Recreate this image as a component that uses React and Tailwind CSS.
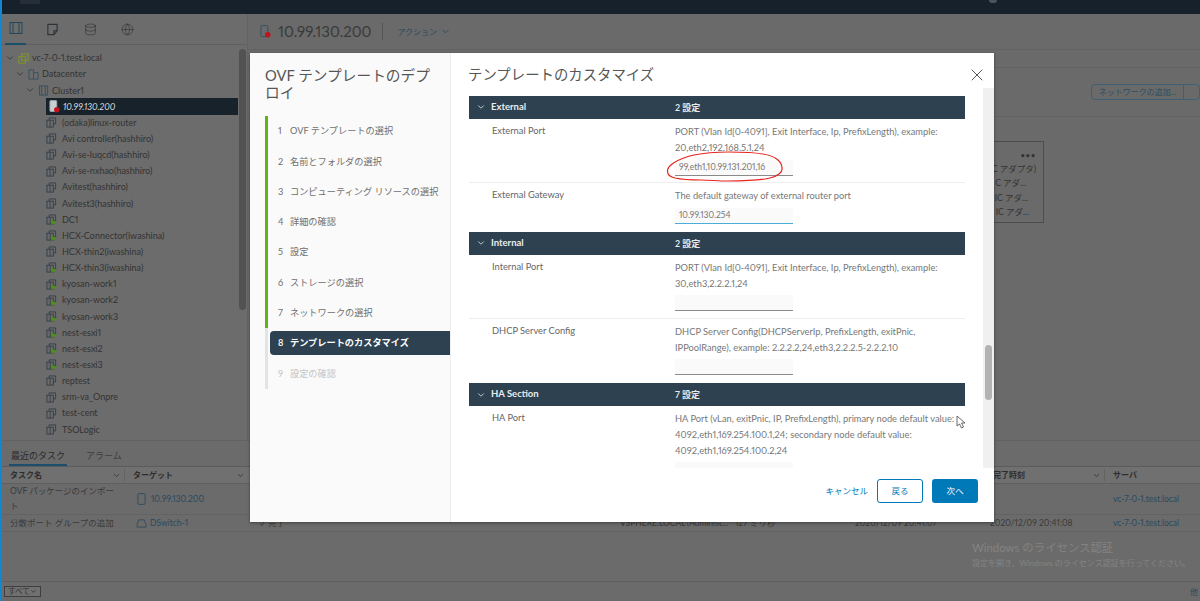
import React from 'react';
import { ChevronDown, Database, Globe, X } from 'lucide-react';

const treeItems = [
  { name: '(odaka)linux-router' },
  { name: 'Avi controller(hashhiro)' },
  { name: 'Avi-se-luqcd(hashhiro)' },
  { name: 'Avi-se-nxhao(hashhiro)' },
  { name: 'Avitest(hashhiro)' },
  { name: 'Avitest3(hashhiro)' },
  { name: 'DC1', on: true },
  { name: 'HCX-Connector(iwashina)', on: true },
  { name: 'HCX-thin2(iwashina)' },
  { name: 'HCX-thin3(iwashina)', on: true },
  { name: 'kyosan-work1', on: true },
  { name: 'kyosan-work2', on: true },
  { name: 'kyosan-work3', on: true },
  { name: 'nest-esxi1', on: true },
  { name: 'nest-esxi2', on: true },
  { name: 'nest-esxi3', on: true },
  { name: 'reptest' },
  { name: 'srm-va_Onpre' },
  { name: 'test-cent' },
  { name: 'TSOLogic' },
];

const steps = [
  'OVF テンプレートの選択',
  '名前とフォルダの選択',
  'コンピューティング リソースの選択',
  '詳細の確認',
  '設定',
  'ストレージの選択',
  'ネットワークの選択',
  'テンプレートのカスタマイズ',
  '設定の確認',
];

const VmIcon = ({ on }) => (
  <svg viewBox="0 0 12 12" className="h-[11px] w-[11px] shrink-0" fill="none" stroke="#333f48" strokeWidth="1">
    <path d="M3.5 3.5V1h7v6.5H8" />
    <rect x="1" y="3.5" width="7" height="7.5" />
    <path d="M4.5 3.5V11" />
    {on && <path d="M6 6l6 3-6 3z" fill="#4f8f1c" stroke="none" />}
  </svg>
);

const HostIcon = ({ dark }) => (
  <svg viewBox="0 0 12 14" className="h-[13px] w-[11px] shrink-0">
    <rect x="1" y="0.5" width="7.5" height="12" rx="1" fill={dark ? '#c9ced1' : 'none'} stroke={dark ? '#9aa4aa' : '#35505f'} />
    <circle cx="8.5" cy="10.5" r="3" fill="#c1131f" />
  </svg>
);

const TreeBranch = ({ indent, icon, children }) => (
  <div className={`flex h-[16.15px] items-center gap-[3px] ${indent}`}>
    <ChevronDown size={10} strokeWidth={2} className="shrink-0 text-[#333]" />
    {icon}
    <span className="whitespace-nowrap">{children}</span>
  </div>
);

const SectionHead = ({ name, count }) => (
  <div className="flex h-[23.5px] items-center bg-[#2d4150] text-[9.5px] font-bold text-[#e8ecee]">
    <ChevronDown size={10} className="ml-[7px] mr-[5px] shrink-0 text-[#dfe5e8]" />
    <span className="w-[184px]">{name}</span>
    <span className="text-[9px] font-semibold">{count}</span>
  </div>
);

const Param = ({ label, lines, value, active, divider, h }) => (
  <div className={`flex items-start pl-[23px] text-[9.3px] text-[#777] ${h} ${divider ? 'border-b border-[#eeeeee]' : ''}`}>
    <span className="w-[183px] shrink-0 pt-[5px] text-[#666]">{label}</span>
    <div className="flex flex-col">
      <div className="pt-[5px] leading-[15.7px]">
        {lines.map((l) => <div key={l} className="whitespace-nowrap">{l}</div>)}
      </div>
      <div className={`mt-[4px] h-[16px] w-[118px] border-b bg-[#fafafa] pl-[4px] text-[8.5px] leading-[15px] text-[#777] ${active ? 'border-[#49afd9]' : 'border-[#8a8a8a]'}`}>
        {value}
      </div>
    </div>
  </div>
);

const App = () => {
  return (
    <div className="relative flex h-[601px] w-[1200px] flex-col overflow-hidden border-l-2 border-[#1187d0] bg-[#6a6a6a] text-[10px] text-[#333] proportional-nums [font-family:Lato,'Noto_Sans_CJK_JP',sans-serif]">
      {/* top bar, dimmed */}
      <div className="flex h-[14px] shrink-0 items-start justify-between bg-[#17212b] pl-[18px] pr-[203px]">
        <div className="h-[4px] w-[20px] bg-[#262f39]" />
        <div className="h-[3px] w-[8px] rounded-b-full bg-[#4c5359]" />
      </div>

      <div className="flex h-[426px] shrink-0">
        {/* inventory */}
        <div className="flex w-[246px] shrink-0 flex-col overflow-hidden border-r border-[#636363] bg-[#6c6c6c]">
          <div className="flex h-[31px] shrink-0 items-center border-b border-[#5f5f5f] pl-[3px]">
            <div className="flex h-[31px] w-[21px] items-center justify-center border-b-2 border-[#1d4f6d]">
              <svg viewBox="0 0 14 14" className="h-[14px] w-[14px]" fill="none" stroke="#25465a" strokeWidth="1">
                <rect x="1" y="1.5" width="12" height="11" />
                <path d="M4 1.5v11M10 1.5v11" />
              </svg>
            </div>
            <svg viewBox="0 0 14 14" className="ml-[20px] h-[13px] w-[13px]" fill="none" stroke="#2d3338" strokeWidth="1.2">
              <path d="M2 1.5h10v7l-3.5 4H2z" />
              <path d="M12 8.5H8.5v4" />
            </svg>
            <Database size={13} strokeWidth={1.2} className="ml-[25px] text-[#333]" />
            <Globe size={13} strokeWidth={1.2} className="ml-[24px] text-[#333]" />
          </div>
          <div className="flex min-h-0 flex-1">
            <div className="min-w-0 flex-1 pl-[3px] pt-[5px] text-[9px] text-[#333]">
              <TreeBranch indent="" icon={
                <svg viewBox="0 0 12 12" className="h-[11px] w-[11px] shrink-0" fill="none" stroke="#7d9426" strokeWidth="1.2">
                  <rect x="1" y="4" width="7" height="7" />
                  <rect x="4" y="1" width="7" height="7" />
                </svg>
              }>vc-7-0-1.test.local</TreeBranch>
              <TreeBranch indent="pl-[10px]" icon={
                <svg viewBox="0 0 12 12" className="h-[11px] w-[11px] shrink-0" fill="none" stroke="#37505f" strokeWidth="1">
                  <path d="M1 11V1h5v10M6 4h5v7H1" />
                </svg>
              }>Datacenter</TreeBranch>
              <TreeBranch indent="pl-[20px]" icon={
                <svg viewBox="0 0 12 12" className="h-[11px] w-[11px] shrink-0" fill="none" stroke="#37505f" strokeWidth="1">
                  <rect x="1.5" y="1" width="9" height="10" />
                  <path d="M4 1v10M8 1v10" />
                </svg>
              }>Cluster1</TreeBranch>
              <div className="ml-[41px] mr-[1px] flex h-[16.15px] items-center gap-[3px] bg-[#17222b] pl-[3px] italic text-[#d9d9d9]">
                <HostIcon dark />
                <span>10.99.130.200</span>
              </div>
              {treeItems.map((t) => (
                <div key={t.name} className="flex h-[16.15px] items-center gap-[5.5px] pl-[40.5px]">
                  <VmIcon on={t.on} />
                  <span className="whitespace-nowrap">{t.name}</span>
                </div>
              ))}
            </div>
            <div className="mr-[1px] mt-[4px] h-[261px] w-[7px] shrink-0 rounded bg-[#525252]" />
          </div>
        </div>

        {/* object view */}
        <div className="min-w-0 flex-1">
          <div className="flex h-[36px] items-center border-b border-[#626262] pl-[12px]">
            <HostIcon />
            <span className="ml-[7px] whitespace-nowrap text-[15px] text-[#3a3a3a]">10.99.130.200</span>
            <div className="ml-[11px] h-[17px] w-px bg-[#555]" />
            <span className="ml-[14px] text-[8px] text-[#284a60]">アクション</span>
            <ChevronDown size={11} className="ml-[3px] text-[#284a60]" />
          </div>
          <div className="h-[18px] border-b border-[#636363]" />
          <div className="flex h-[49px] items-center justify-end border-b border-[#636363]">
            <div className="flex h-[16px] w-[109px] items-center rounded-sm border border-[#3f6074]">
              <span className="w-[92px] whitespace-nowrap border-r border-[#3f6074] text-center text-[8px] leading-[14px] text-[#2c4d62]">ネットワークの追加...</span>
            </div>
          </div>
          <div className="flex justify-start pl-[740px] pt-[24px]">
            <div className="flex h-[82px] w-[56px] shrink-0 flex-col items-end border border-[#4d4d4d] pr-[7px] pt-[6px] text-[8.5px] leading-[14.3px] text-[#333]">
              <span className="text-[7px] font-bold leading-[14px] tracking-[1px]">•••</span>
              <span className="whitespace-nowrap">C アダプタ)</span>
              <span className="mr-[10px] whitespace-nowrap">C アダ...</span>
              <span className="mr-[8px] whitespace-nowrap">IC アダ...</span>
              <span className="mr-[7px] whitespace-nowrap">IC アダ...</span>
            </div>
          </div>
        </div>
      </div>

      {/* recent tasks */}
      <div className="flex min-h-0 flex-1 flex-col border-t border-[#626262] bg-[#6b6b6b]">
        <div className="flex h-[26px] shrink-0 items-end gap-[19px] border-b border-[#5c5c5c] pl-[7px] text-[9px]">
          <span className="border-b-2 border-[#1d4f6d] px-[2px] pb-[2px] text-[#2a2a2a]">最近のタスク</span>
          <span className="pb-[4px] text-[#3d3d3d]">アラーム</span>
        </div>
        <div className="grid h-[17px] shrink-0 grid-cols-[123px_123px_372px_115px_120px_135px_115px_95px] items-center border-b border-[#5f5f5f] bg-[#707070] text-[8px] font-semibold text-[#2d2d2d]">
          <div className="flex items-center justify-between border-r border-[#636363] pl-[8px] pr-[3px]">タスク名<ChevronDown size={9} /></div>
          <div className="flex items-center justify-between pl-[8px] pr-[3px]">ターゲット<ChevronDown size={9} /></div>
          <div />
          <div />
          <div />
          <div />
          <div className="flex items-center justify-between border-r border-[#636363] pl-[3px] pr-[3px]">完了時刻<ChevronDown size={9} /></div>
          <div className="pl-[8px]">サーバ</div>
        </div>
        <div className="grid h-[31px] shrink-0 grid-cols-[123px_123px_372px_115px_120px_135px_115px_95px] items-center border-b border-[#636363] text-[8.5px] text-[#3a3a3a]">
          <div className="pl-[8px] pr-[8px] leading-[15px]">OVF パッケージのインポート</div>
          <div className="flex items-center gap-[5px] pl-[12px] text-[#284a60]">
            <svg viewBox="0 0 10 13" className="h-[12px] w-[9px]" fill="none" stroke="#31495a"><rect x="1" y="0.5" width="8" height="12" rx="1" /></svg>
            10.99.130.200
          </div>
          <div /><div /><div /><div /><div />
          <div className="pl-[8px] text-[#284a60]">vc-7-0-1.test.local</div>
        </div>
        <div className="grid h-[17px] shrink-0 grid-cols-[123px_123px_372px_115px_120px_135px_115px_95px] items-center border-b border-[#636363] text-[8.5px] text-[#3a3a3a]">
          <div className="whitespace-nowrap pl-[8px]">分散ポート グループの追加</div>
          <div className="flex items-center gap-[3px] pl-[11px] text-[#284a60]">
            <svg viewBox="0 0 12 10" className="h-[9px] w-[11px]" fill="none" stroke="#31495a"><path d="M3 1h6l2 5v3H1V6z" /></svg>
            DSwitch-1
          </div>
          <div className="whitespace-nowrap pl-[12px]">✓ 完了</div>
          <div className="whitespace-nowrap">VSPHERE.LOCAL\Administ...</div>
          <div className="whitespace-nowrap">127 ミリ秒</div>
          <div className="whitespace-nowrap">2020/12/09 20:41:07</div>
          <div className="whitespace-nowrap">2020/12/09 20:41:08</div>
          <div className="pl-[8px] text-[#284a60]">vc-7-0-1.test.local</div>
        </div>
        <div className="flex min-h-0 flex-1 flex-col justify-end">
          <div className="flex h-[20px] items-center justify-between border-t border-[#5f5f5f] pl-[2px] pr-[2px]">
            <div className="flex h-[11px] w-[37px] items-center justify-between whitespace-nowrap border border-[#3f3f3f] bg-[#707070] px-[3px] text-[7.5px] leading-none text-[#333]">
              すべて<ChevronDown size={7} strokeWidth={3} className="shrink-0" />
            </div>
            <span className="text-[8px] text-[#284a60]">他</span>
          </div>
        </div>
      </div>

      {/* windows watermark */}
      <div className="absolute left-[970px] top-[540px] whitespace-nowrap text-[#838383]">
        <div className="text-[11.4px] leading-[16px]">Windows のライセンス認証</div>
        <div className="text-[8px] leading-[14px]">設定を開き、Windows のライセンス認証を行ってください。</div>
      </div>

      {/* deploy wizard */}
      <div className="absolute left-[248px] top-[53px] flex h-[469px] w-[744px] bg-white shadow-[0_1px_3px_rgba(0,0,0,0.4)]">
        <div className="w-[201px] shrink-0 border-r border-[#eeeeee] bg-[#fafafa]">
          <h1 className="pl-[15px] pr-[6px] pt-[14px] text-[14.7px] font-normal leading-[16.5px] text-[#565656]">OVF テンプレートのデプロイ</h1>
          <div className="ml-[15px] mt-[16px] flex border-l-[3px] border-[#e3e3e3]">
            <div className="-ml-[3px] w-[3px] shrink-0 self-start">
              <div className="h-[212px] w-[3px] bg-[#60b515]" />
            </div>
            <div className="ml-[2px] min-w-0 flex-1">
              {steps.map((s, i) => (
                <div
                  key={s}
                  className={`flex h-[30.3px] items-center whitespace-nowrap text-[9.2px] ${i === 8 ? 'text-[#c4c4c4]' : 'text-[#6f6f6f]'}`}
                >
                  {i === 7 ? (
                    <div className="flex h-[24px] w-full items-center rounded-l-sm bg-[#2d4150] pl-[8px] font-semibold text-white">
                      <span className="w-[12px]">8</span>{s}
                    </div>
                  ) : (
                    <span className="flex pl-[8px]"><span className="w-[12px]">{i + 1}</span>{s}</span>
                  )}
                </div>
              ))}
            </div>
          </div>
        </div>

        <div className="relative flex min-w-0 flex-1 flex-col">
          <div className="flex h-[35px] shrink-0 items-center justify-between pl-[17px] pr-[7px] pt-[9px]">
            <span className="text-[14.4px] leading-[20px] text-[#565656]">テンプレートのカスタマイズ</span>
            <X size={20} strokeWidth={1.2} className="text-[#555]" />
          </div>
          <div className="flex h-[380px] shrink-0 overflow-hidden">
            <div className="min-w-0 flex-1 overflow-hidden pl-[18px] pr-[18px] pt-[7.7px]">
              <SectionHead name="External" count="2 設定" />
              <Param h="h-[64px]" divider label="External Port" lines={['PORT (Vlan Id[0-4091], Exit Interface, Ip, PrefixLength), example:', '20,eth2,192.168.5.1,24']} value="99,eth1,10.99.131.201,16" />
              <Param h="h-[48.4px]" label="External Gateway" lines={['The default gateway of external router port']} value="10.99.130.254" active />
              <SectionHead name="Internal" count="2 設定" />
              <Param h="h-[64px]" divider label="Internal Port" lines={['PORT (Vlan Id[0-4091], Exit Interface, Ip, PrefixLength), example:', '30,eth3,2.2.2.1,24']} />
              <Param h="h-[63.7px]" label="DHCP Server Config" lines={['DHCP Server Config(DHCPServerIp, PrefixLength, exitPnic,', 'IPPoolRange), example: 2.2.2.2,24,eth3,2.2.2.5-2.2.2.10']} />
              <SectionHead name="HA Section" count="7 設定" />
              <Param h="h-[80px]" label="HA Port" lines={['HA Port (vLan, exitPnic, IP, PrefixLength), primary node default value:', '4092,eth1,169.254.100.1,24; secondary node default value:', '4092,eth1,169.254.100.2,24']} />
            </div>
            <div className="flex w-[11px] shrink-0 flex-col bg-[#f0f0f0] pt-[257px]">
              <div className="ml-[2px] h-[55px] w-[7px] rounded bg-[#b3b3b3]" />
            </div>
          </div>
          <div className="flex flex-1 items-center justify-end gap-[9px] pb-[8px] pr-[16px]">
            <span className="text-[8.5px] text-[#0079b8]">キャンセル</span>
            <button className="h-[24px] w-[46px] rounded-[3px] border border-[#0079b8] bg-white text-[8.5px] text-[#0079b8]">戻る</button>
            <button className="h-[24px] w-[46px] rounded-[3px] bg-[#0079b8] text-[8.5px] text-white">次へ</button>
          </div>
        </div>
      </div>

      {/* red marker circle drawn over the input */}
      <svg className="absolute left-[658px] top-[145px] h-[45px] w-[130px]" viewBox="0 0 130 45" fill="none" stroke="#e8231c" strokeWidth="1.2">
        <path d="M67 36C85 36 103 35 110 33C118 31 123 27 122 23C122 17 116 11 103 9C92 7 80 7 68.6 7C55 7 44 8 34 10C25 12 18 15 13.5 18C9 21 7 24 7.6 27C8 31 11 32 15 33C24 35 32 35 41 35C50 35 58 36 67 36" />
      </svg>

      {/* mouse pointer */}
      <svg className="absolute left-[954px] top-[415px] h-[14px] w-[10px]" viewBox="0 0 10 14" fill="white" stroke="#444" strokeWidth="0.8">
        <path d="M1 1v10l2.5-2 2 4 2-1-2-4H9z" />
      </svg>
    </div>
  );
};

export default App;
